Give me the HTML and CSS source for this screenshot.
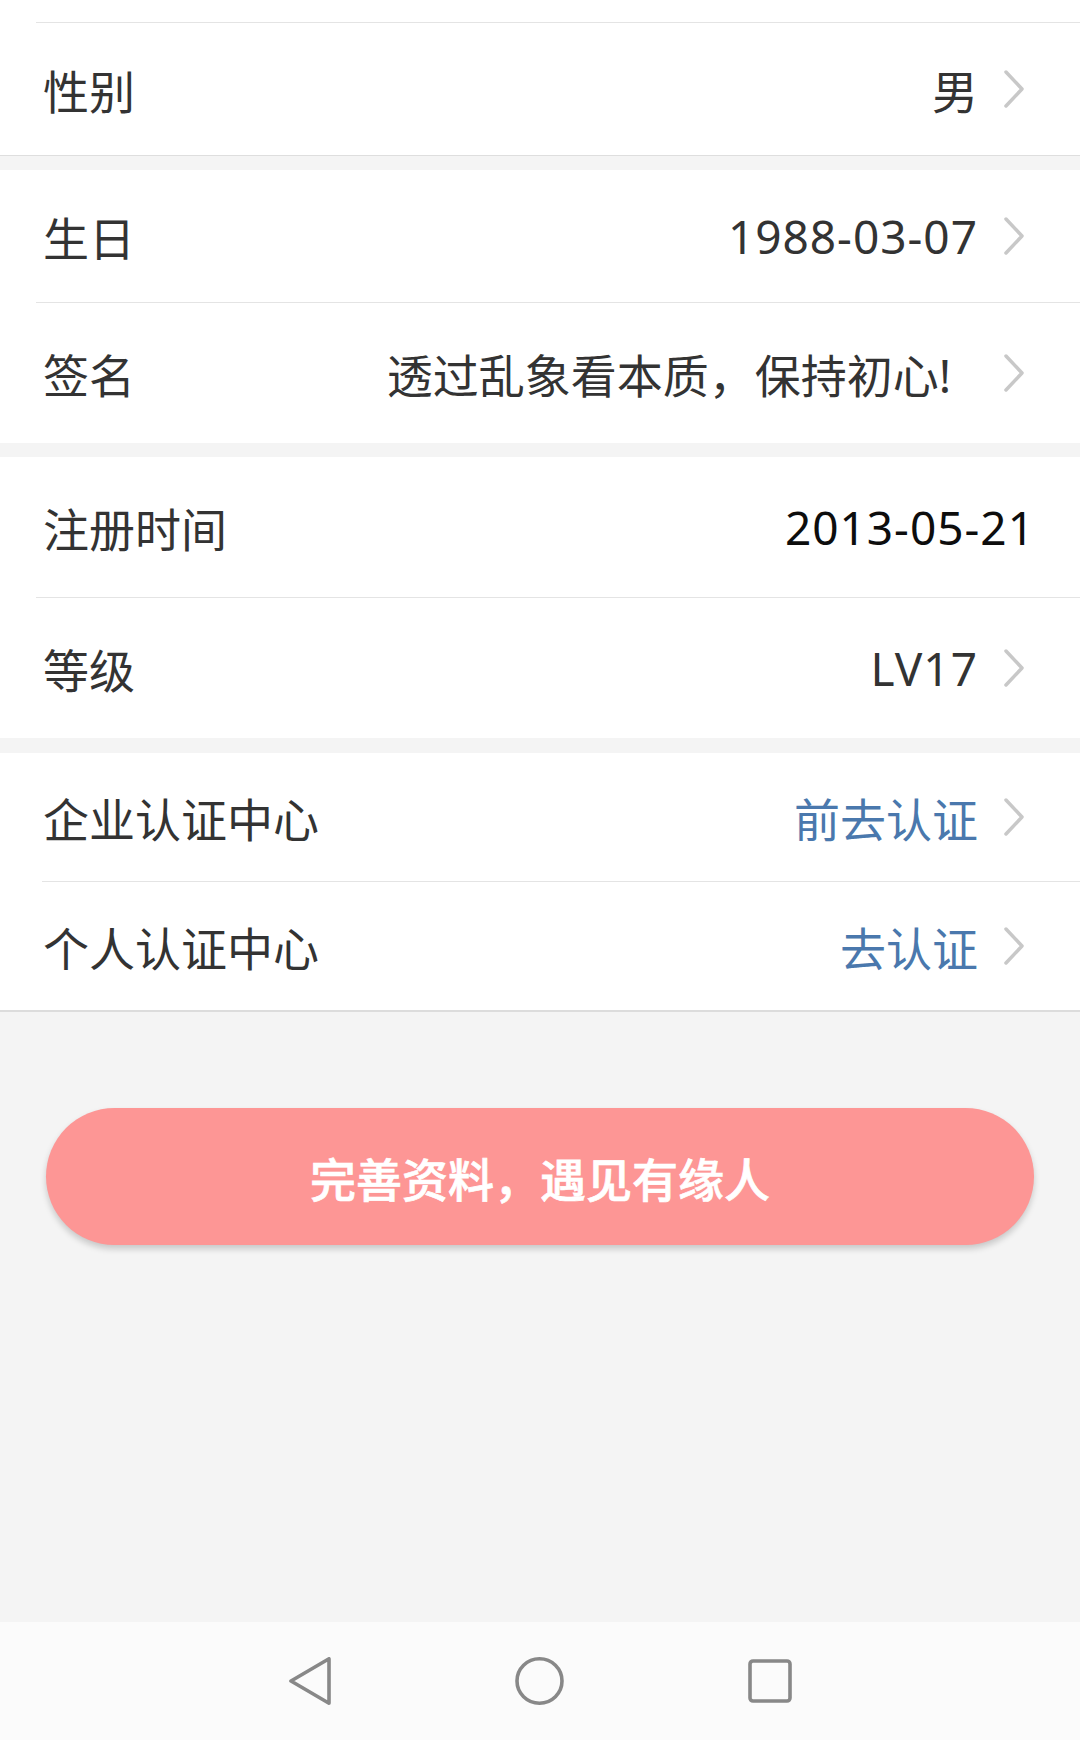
FILE: index.html
```html
<!DOCTYPE html>
<html lang="zh-CN">
<head>
<meta charset="utf-8">
<title>个人资料</title>
<link rel="stylesheet" href="styles.css">
</head>
<body>
<div class="page">
  <section class="group first">
    <div class="top-strip"></div>
    <div class="divider"></div>
    <div class="row h132">
      <span class="label">性别</span>
      <span class="value">男</span>
      <svg class="chev" viewBox="0 0 22 40" width="22" height="40"><polyline points="3,3 19,20 3,37"/></svg>
    </div>
  </section>

  <section class="group">
    <div class="row h132">
      <span class="label">生日</span>
      <span class="value num">1988-03-07</span>
      <svg class="chev" viewBox="0 0 22 40" width="22" height="40"><polyline points="3,3 19,20 3,37"/></svg>
    </div>
    <div class="divider"></div>
    <div class="row h140">
      <span class="label">签名</span>
      <span class="value sig">透过乱象看本质，保持初心!</span>
      <svg class="chev" viewBox="0 0 22 40" width="22" height="40"><polyline points="3,3 19,20 3,37"/></svg>
    </div>
  </section>

  <section class="group">
    <div class="row h140 plain">
      <span class="label">注册时间</span>
      <span class="value num dark">2013-05-21</span>
    </div>
    <div class="divider"></div>
    <div class="row h140">
      <span class="label">等级</span>
      <span class="value num">LV17</span>
      <svg class="chev" viewBox="0 0 22 40" width="22" height="40"><polyline points="3,3 19,20 3,37"/></svg>
    </div>
  </section>

  <section class="group last">
    <div class="row h128">
      <span class="label">企业认证中心</span>
      <span class="value link">前去认证</span>
      <svg class="chev" viewBox="0 0 22 40" width="22" height="40"><polyline points="3,3 19,20 3,37"/></svg>
    </div>
    <div class="divider wide"></div>
    <div class="row h128">
      <span class="label">个人认证中心</span>
      <span class="value link">去认证</span>
      <svg class="chev" viewBox="0 0 22 40" width="22" height="40"><polyline points="3,3 19,20 3,37"/></svg>
    </div>
  </section>

  <div class="action">
    <button class="cta" type="button">完善资料，遇见有缘人</button>
  </div>
</div>

<nav class="navbar">
  <svg class="nav-icon" viewBox="0 0 42 48" width="42" height="48"><polygon points="2,24 40,1.8 40,46.2"/></svg>
  <svg class="nav-icon" viewBox="0 0 49 48" width="49" height="48"><ellipse cx="24.5" cy="24" rx="22.5" ry="22.2"/></svg>
  <svg class="nav-icon" viewBox="0 0 44 44" width="44" height="44"><rect x="2" y="2" width="40" height="40" rx="3" ry="3"/></svg>
</nav>
</body>
</html>
```
FILE: styles.css
```css
* {
  box-sizing: border-box;
}

html, body {
  margin: 0;
  padding: 0;
}

body {
  width: 1080px;
  height: 1740px;
  background: #f4f4f4;
  font-family: "Noto Sans", "Noto Sans CJK SC", sans-serif;
  color: #333333;
  display: flex;
  flex-direction: column;
  overflow: hidden;
}

.page {
  flex: 1;
  display: flex;
  flex-direction: column;
}

.group {
  background: #ffffff;
  margin-top: 14px;
}

.group.first {
  margin-top: 0;
  border-bottom: 1px solid #dedede;
}

.group.last {
  margin-top: 15px;
  border-bottom: 2px solid #dcdcdc;
}

.top-strip {
  height: 22px;
}

.divider {
  height: 1px;
  margin-left: 36px;
  background: #e4e4e4;
}

.divider.wide {
  margin-left: 42px;
}

.row {
  display: flex;
  align-items: center;
  padding: 0 55px 0 43px;
  font-size: 46px;
}

.row.h132 { height: 132px; }
.row.h140 { height: 140px; }
.row.h128 { height: 128px; }

.row.plain {
  padding-right: 45px;
}

.label {
  color: #333333;
}

.value {
  margin-left: auto;
  color: #333333;
}

.value.num {
  letter-spacing: 1px;
}

.value.dark {
  color: #0d0d0d;
}

.value.link {
  color: #4a78ad;
}

.value.sig {
  margin-right: 27px;
}

.chev {
  margin-left: 25px;
  flex: none;
}

.chev polyline {
  fill: none;
  stroke: #c8c8c8;
  stroke-width: 3.5;
  stroke-linecap: round;
  stroke-linejoin: round;
}

.action {
  padding: 96px 46px 0 46px;
}

.cta {
  display: block;
  width: 100%;
  height: 137px;
  border: none;
  border-radius: 69px;
  background: #fd9695;
  color: #ffffff;
  font-family: "Noto Sans CJK SC", sans-serif;
  font-size: 46px;
  font-weight: 500;
  -webkit-text-stroke: 0.7px #ffffff;
  box-shadow: 0 4px 6px rgba(0, 0, 0, 0.18);
  padding: 0;
}

.navbar {
  height: 118px;
  flex: none;
  background: #fbfbfb;
  display: flex;
  align-items: center;
  justify-content: center;
  gap: 184px;
}

.nav-icon {
  flex: none;
}

.nav-icon polygon,
.nav-icon ellipse,
.nav-icon rect {
  fill: none;
  stroke: #888888;
  stroke-width: 3.6;
  stroke-linejoin: round;
}
```
